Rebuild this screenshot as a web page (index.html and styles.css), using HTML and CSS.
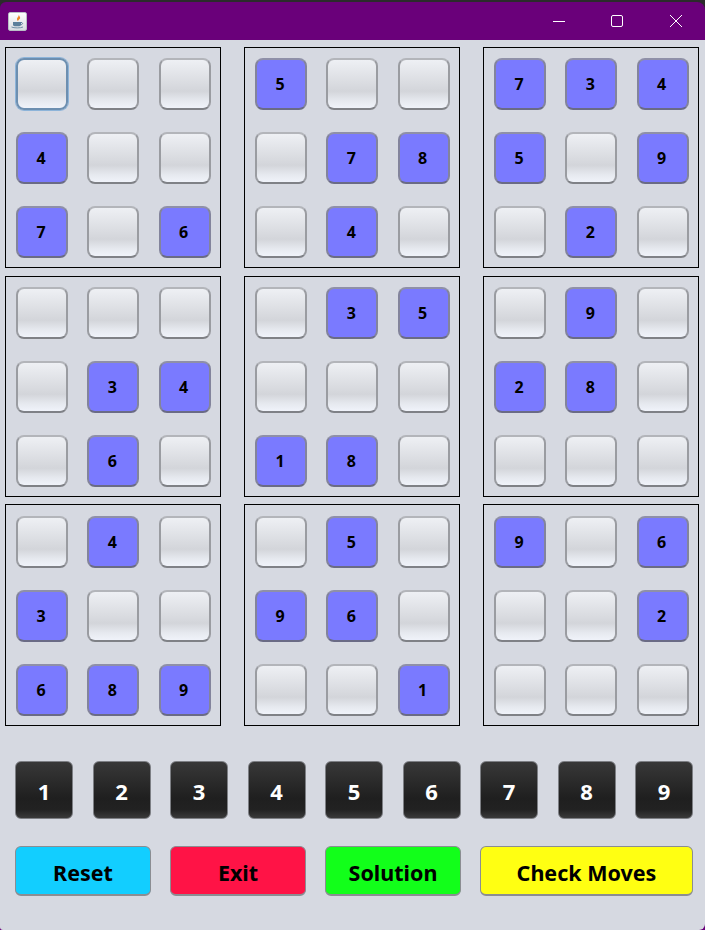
FILE: index.html
```html
<!DOCTYPE html>
<html lang="en">
<head>
    <meta charset="UTF-8">
    <title>Sudoku</title>
    <link rel="stylesheet" href="styles.css">
</head>
<body>
    <div class="window">
        <div class="titlebar">
            <div class="app-icon">
                <svg width="17" height="17" viewBox="0 0 17 17">
                    <path d="M9.500 1.500c1.200 2-2.300 3-1.300 5.500.2.600.5 1 .9 1.300-.2-1.500 3-2.300 1.800-4.300-.3-.9-.9-1.700-1.400-2.500z" fill="#ee8527"/>
                    <path d="M4 9h8v2.500c0 1-.8 1.700-1.700 1.700H5.700c-1 0-1.700-.7-1.700-1.700z" fill="#5b7f9b"/>
                    <path d="M12 9.500c1.800-.3 2.300 1.700 0 2.300" fill="none" stroke="#5b7f9b"/>
                    <path d="M2.500 14c2.500 1.200 9 1.200 11.500 0" fill="none" stroke="#6f8ea6"/>
                </svg>
            </div>
            <div class="win-controls">
                <svg width="14" height="14" viewBox="0 0 14 14"><path d="M1 7.500h12" stroke="#fff" fill="none"/></svg>
                <svg width="14" height="14" viewBox="0 0 14 14"><rect x="1.500" y="1.500" width="11" height="11" rx="1.500" stroke="#fff" fill="none"/></svg>
                <svg width="14" height="14" viewBox="0 0 14 14"><path d="M1 1l12 12M13 1L1 13" stroke="#fff" fill="none"/></svg>
            </div>
        </div>

        <div class="content">
            <div class="board">
                <div class="block">
                    <button class="cell focus"></button><button class="cell"></button><button class="cell"></button>
                    <button class="cell given">4</button><button class="cell"></button><button class="cell"></button>
                    <button class="cell given">7</button><button class="cell"></button><button class="cell given">6</button>
                </div>
                <div class="block">
                    <button class="cell given">5</button><button class="cell"></button><button class="cell"></button>
                    <button class="cell"></button><button class="cell given">7</button><button class="cell given">8</button>
                    <button class="cell"></button><button class="cell given">4</button><button class="cell"></button>
                </div>
                <div class="block">
                    <button class="cell given">7</button><button class="cell given">3</button><button class="cell given">4</button>
                    <button class="cell given">5</button><button class="cell"></button><button class="cell given">9</button>
                    <button class="cell"></button><button class="cell given">2</button><button class="cell"></button>
                </div>
                <div class="block">
                    <button class="cell"></button><button class="cell"></button><button class="cell"></button>
                    <button class="cell"></button><button class="cell given">3</button><button class="cell given">4</button>
                    <button class="cell"></button><button class="cell given">6</button><button class="cell"></button>
                </div>
                <div class="block">
                    <button class="cell"></button><button class="cell given">3</button><button class="cell given">5</button>
                    <button class="cell"></button><button class="cell"></button><button class="cell"></button>
                    <button class="cell given">1</button><button class="cell given">8</button><button class="cell"></button>
                </div>
                <div class="block">
                    <button class="cell"></button><button class="cell given">9</button><button class="cell"></button>
                    <button class="cell given">2</button><button class="cell given">8</button><button class="cell"></button>
                    <button class="cell"></button><button class="cell"></button><button class="cell"></button>
                </div>
                <div class="block">
                    <button class="cell"></button><button class="cell given">4</button><button class="cell"></button>
                    <button class="cell given">3</button><button class="cell"></button><button class="cell"></button>
                    <button class="cell given">6</button><button class="cell given">8</button><button class="cell given">9</button>
                </div>
                <div class="block">
                    <button class="cell"></button><button class="cell given">5</button><button class="cell"></button>
                    <button class="cell given">9</button><button class="cell given">6</button><button class="cell"></button>
                    <button class="cell"></button><button class="cell"></button><button class="cell given">1</button>
                </div>
                <div class="block">
                    <button class="cell given">9</button><button class="cell"></button><button class="cell given">6</button>
                    <button class="cell"></button><button class="cell"></button><button class="cell given">2</button>
                    <button class="cell"></button><button class="cell"></button><button class="cell"></button>
                </div>
            </div>

            <div class="numbers">
                <button class="num">1</button>
                <button class="num">2</button>
                <button class="num">3</button>
                <button class="num">4</button>
                <button class="num">5</button>
                <button class="num">6</button>
                <button class="num">7</button>
                <button class="num">8</button>
                <button class="num">9</button>
            </div>

            <div class="actions">
                <button class="action reset">Reset</button>
                <button class="action exit">Exit</button>
                <button class="action solution">Solution</button>
                <button class="action check">Check Moves</button>
            </div>
        </div>
    </div>
</body>
</html>
```

FILE: styles.css
```css
html, body {
    margin: 0;
    height: 100%;
    background: #6a007a;
}
.window {
    width: 705px;
    height: 930px;
    overflow: hidden;
    font-family: "Noto Sans", sans-serif;
    background: linear-gradient(#2b2b2b 20px, #6a007a 20px);
    padding-top: 2px;
    box-sizing: border-box;
}
.titlebar {
    height: 38px;
    background: #6a007a;
    border-radius: 6px 8px 0 0;
    display: flex;
    align-items: center;
    justify-content: space-between;
    padding: 0 22px 0 8px;
}
.app-icon {
    width: 19px;
    height: 19px;
    box-sizing: border-box;
    background: linear-gradient(#ffffff, #d9dde2);
    border: 1px solid #b9bec6;
    border-radius: 2px;
    display: flex;
}
.win-controls {
    display: flex;
    gap: 44px;
}
.win-controls svg:last-child {
    margin-left: 1px;
}
.content {
    height: 890px;
    background: #d6d9e1;
    border-radius: 0 0 6px 3px;
}
.board {
    display: grid;
    grid-template-columns: repeat(3, 216px);
    grid-template-rows: 222px 221px 222px;
    column-gap: 23px;
    row-gap: 7px;
    padding: 7px 0 0 5px;
}
.block {
    border: 1px solid #000;
    box-sizing: border-box;
    display: grid;
    grid-template-columns: repeat(3, 52px);
    grid-auto-rows: 52px;
    column-gap: 19.25px;
    row-gap: 22px;
    padding: 10px 0 0 10px;
}
.block:nth-child(-n+3) {
    height: 221px;
}
.block:nth-child(n+7) {
    padding-top: 11px;
}
button {
    font-family: inherit;
    font-weight: 700;
    padding: 0;
    box-sizing: border-box;
}
.cell {
    padding-right: 2px;
    font-size: 16px;
    color: #000;
    border: 2px solid;
    border-color: #b3b5ba #9a9ca1 #7f8186;
    border-radius: 8px;
    background: linear-gradient(#eef0f4 0%, #d3d5da 65%, #e6e9ef 85%, #f0f3fa 100%);
}
.cell.focus {
    border-color: #6d8fb0;
    box-shadow: 0 0 0 1px #8db4d9;
}
.cell.given {
    border-color: #8f90a8 #83849c #6a6b85;
    background: #7a7aff;
}
.numbers {
    display: grid;
    grid-template-columns: repeat(9, 58px);
    column-gap: 19.5px;
    padding: 35px 0 0 15px;
}
.num {
    height: 58px;
    padding-top: 1px;
    font-size: 22px;
    color: #fff;
    border: 1px solid #7d7f84;
    border-radius: 6px;
    background: linear-gradient(#383838 0%, #1f1f1f 65%, #222 85%, #3a3a3a 100%);
}
.actions {
    display: grid;
    grid-template-columns: 136px 136px 136px 213px;
    column-gap: 19px;
    padding: 27px 0 0 15px;
}
.action {
    height: 50px;
    padding-top: 4px;
    font-size: 21.5px;
    color: #000;
    border: 1px solid #8b8d92;
    border-bottom-width: 2px;
    border-radius: 6px;
}
.reset { background: #12ceff; }
.exit { background: #ff1346; }
.solution { background: #12ff1a; }
.check { background: #ffff12; }
```
